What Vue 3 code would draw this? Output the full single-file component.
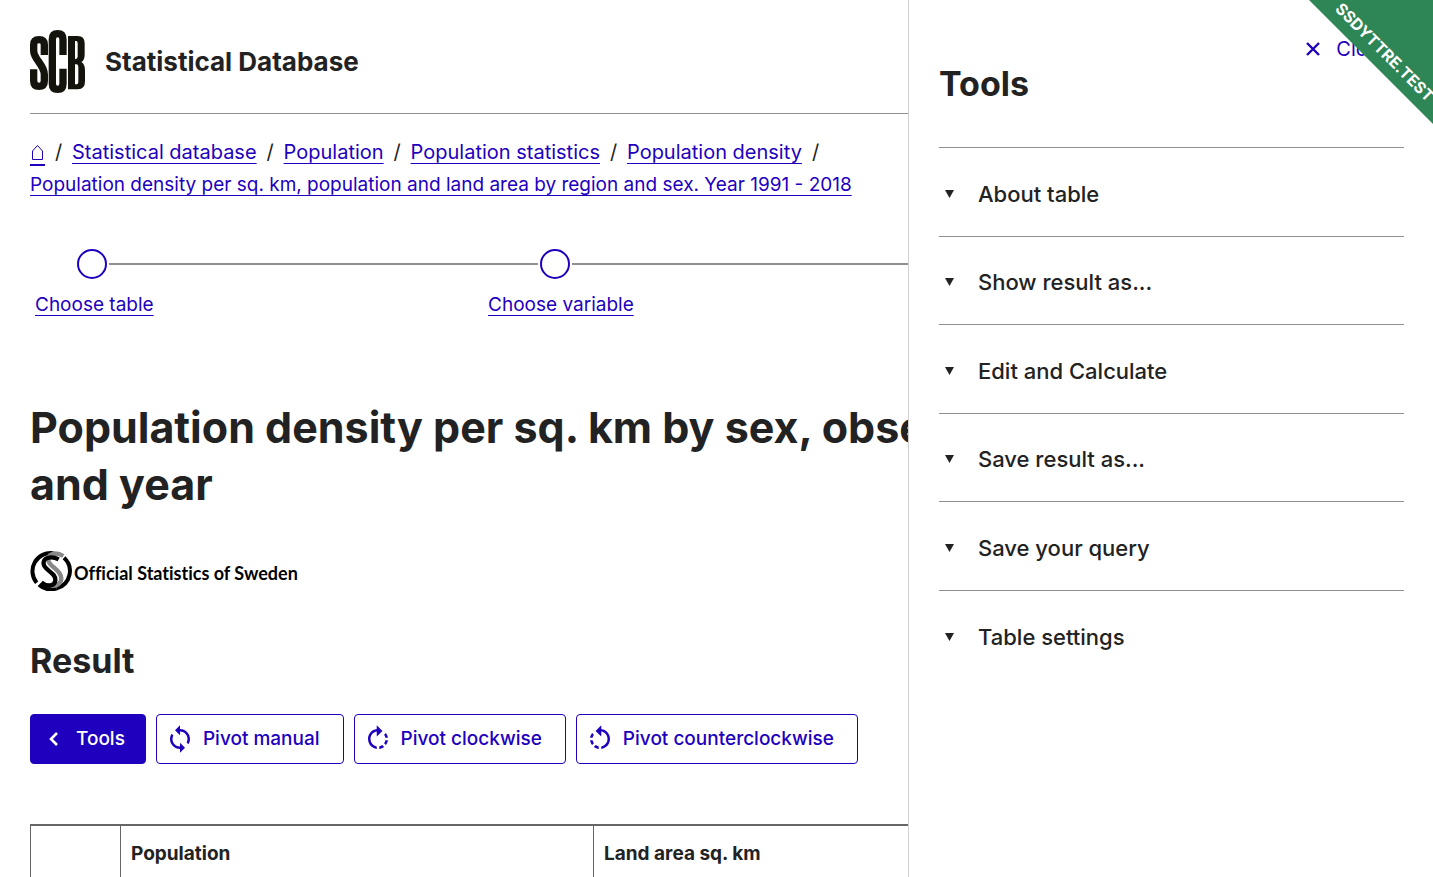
<script setup>
const crumbs = ['Statistical database', 'Population', 'Population statistics', 'Population density']
const lastCrumb = 'Population density per sq. km, population and land area by region and sex. Year 1991 - 2018'
const steps = ['Choose table', 'Choose variable']
const pivots = [
  {
    label: 'Pivot manual',
    path: 'M12 4V1L8 5l4 4V6c3.31 0 6 2.69 6 6 0 1.01-.25 1.97-.7 2.8l1.46 1.46C19.54 15.03 20 13.57 20 12c0-4.42-3.58-8-8-8zm0 14c-3.31 0-6-2.69-6-6 0-1.01.25-1.97.7-2.8L5.24 7.74C4.46 8.97 4 10.43 4 12c0 4.42 3.58 8 8 8v3l4-4-4-4v3z'
  },
  {
    label: 'Pivot clockwise',
    path: 'M15.55 5.55L11 1v3.07C7.06 4.56 4 7.92 4 12s3.05 7.44 7 7.93v-2.02c-2.84-.48-5-2.94-5-5.91s2.16-5.43 5-5.91V10l4.55-4.45zM19.93 11c-.17-1.39-.72-2.73-1.62-3.89l-1.42 1.42c.54.75.88 1.6 1.02 2.47h2.02zM13 17.9v2.02c1.39-.17 2.74-.71 3.9-1.61l-1.44-1.44c-.75.54-1.59.89-2.46 1.03zm3.89-2.42l1.42 1.41c.9-1.16 1.45-2.5 1.62-3.89h-2.02c-.14.87-.48 1.72-1.02 2.48z'
  },
  {
    label: 'Pivot counterclockwise',
    path: 'M7.11 8.53L5.7 7.11C4.8 8.27 4.24 9.61 4.07 11h2.02c.14-.87.49-1.72 1.02-2.47zM6.09 13H4.07c.17 1.39.72 2.73 1.62 3.89l1.41-1.42c-.52-.75-.87-1.59-1.01-2.47zm1.01 5.32c1.16.9 2.51 1.44 3.9 1.61V17.9c-.87-.15-1.71-.49-2.46-1.03L7.1 18.32zM13 4.07V1L8.45 5.55 13 10V6.09c2.84.48 5 2.94 5 5.91s-2.16 5.43-5 5.91v2.02c3.95-.49 7-3.85 7-7.93s-3.05-7.44-7-7.93z'
  }
]
const sections = ['About table', 'Show result as...', 'Edit and Calculate', 'Save result as...', 'Save your query', 'Table settings']
</script>

<template>
  <div class="page">
    <main class="content">
      <header class="site-header">
        <svg class="scb" viewBox="0 0 165 189" aria-label="SCB" role="img">
          <g fill="none" stroke="#15140c" stroke-width="22">
            <path d="M43 75V44Q43 29 27 29Q11 29 11 44V62C11 88 43 104 43 134V152Q43 169 27 169Q11 169 11 152V118" />
            <path d="M99 75V28Q99 11 83 11Q67 11 67 28V161Q67 178 83 178Q99 178 99 161V116" />
          </g>
          <path fill="#15140c" fill-rule="evenodd" d="M114 18H143Q164 18 164 40V74Q164 91 154 96Q165 103 165 120V154Q165 178 144 178H114ZM135 33V87H138Q143 87 143 79V40Q143 33 138 33ZM135 103V163H139Q145 163 145 155V112Q145 103 139 103Z" />
        </svg>
        <span class="site-name">Statistical Database</span>
      </header>

      <nav class="crumbs" aria-label="Breadcrumb">
        <a href="#" class="home" aria-label="Home">
          <svg viewBox="0 0 15 20" aria-hidden="true"><path d="M2.500 17.500V9L7.500 3.500L12.500 9V17.500Z" fill="none" stroke="currentColor" /></svg>
        </a>
        <span class="slash">/</span>
        <template v-for="c in crumbs" :key="c">
          <a href="#">{{ c }}</a><span class="slash">/</span>
        </template>
        <a href="#" class="current">{{ lastCrumb }}</a>
      </nav>

      <ol class="steps">
        <li v-for="s in steps" :key="s" class="step">
          <div class="track"><i class="before"></i><i class="dot"></i><i class="after"></i></div>
          <a href="#">{{ s }}</a>
        </li>
        <li class="step" aria-hidden="true"><div class="track"><i class="before"></i></div></li>
      </ol>

      <h1>Population density per sq. km by sex, observations and year</h1>

      <div class="official">
        <svg viewBox="0 0 126 120" aria-hidden="true" fill="none">
          <path d="M70 7A54 54 0 0 0 20 95" stroke="#000" stroke-width="12" />
          <path d="M27 101A54 54 0 0 0 80 112" stroke="#000" stroke-width="12" />
          <path d="M102 20A54 54 0 0 1 80 112" stroke="#000" stroke-width="12" />
          <path d="M100 15C75 0 48 10 56 32C63 49 94 58 94 82C94 98 78 107 62 104" stroke="#888" stroke-width="13" />
          <path d="M86 25C62 12 34 22 42 43C49 61 78 66 76 88C75 104 54 110 34 94" stroke="#000" stroke-width="13" />
        </svg>
        <span>Official Statistics of Sweden</span>
      </div>

      <h2>Result</h2>

      <div class="actions">
        <button type="button" class="btn primary">
          <svg class="chevron" viewBox="0 0 16 16" aria-hidden="true"><path d="M12 2L6 8L12 14" fill="none" stroke="currentColor" stroke-width="2.600" /></svg>
          Tools
        </button>
        <button v-for="p in pivots" :key="p.label" type="button" class="btn">
          <svg class="icon" viewBox="0 0 24 24" aria-hidden="true"><path :d="p.path" fill="currentColor" /></svg>
          {{ p.label }}
        </button>
      </div>

      <table class="result">
        <thead>
          <tr>
            <td class="stub"></td>
            <th scope="col" class="pop">Population</th>
            <th scope="col">Land area sq. km</th>
          </tr>
        </thead>
      </table>
    </main>

    <aside class="drawer">
      <div class="drawer-head">
        <button type="button" class="close">
          <svg viewBox="0 0 14 14" aria-hidden="true"><path d="M1 1L13 13M13 1L1 13" stroke="currentColor" stroke-width="2.400" fill="none" /></svg>
          Close
        </button>
        <h2>Tools</h2>
      </div>
      <div class="sections">
        <button v-for="s in sections" :key="s" type="button" class="section">
          <svg viewBox="0 0 9 8" aria-hidden="true"><path d="M0 0H9L4.500 8Z" fill="currentColor" /></svg>
          {{ s }}
        </button>
      </div>
    </aside>

    <div class="ribbon"><span>SSDYTTRE.TEST</span></div>
  </div>
</template>

<style>
body {
  overflow: hidden;
  background: #fff;
}
</style>

<style scoped>
.page {
  position: relative;
  height: 100vh;
  overflow: hidden;
  color: #222;
  font-family: Inter, "Liberation Sans", sans-serif;
  font-size: 20px;
  line-height: 32px;
}
.content {
  padding: 0 30px;
}
a {
  color: #1e00be;
  text-decoration: underline;
  text-decoration-thickness: 1px;
  text-underline-offset: 4px;
}
button {
  font: inherit;
  cursor: pointer;
}
.site-header {
  display: flex;
  align-items: center;
  gap: 20px;
  padding: 30px 0 20px;
  border-bottom: 1px solid #909090;
}
.scb {
  width: 55px;
  height: 63px;
}
.site-name {
  font-size: 26px;
  font-weight: 700;
}
.crumbs {
  max-width: 875px;
  padding-top: 22px;
}
.current {
  display: inline-block;
  font-size: 19px;
}
.home {
  display: inline-block;
  width: 15px;
  height: 22px;
  border-bottom: 2px solid #1e00be;
  vertical-align: middle;
}
.home svg {
  display: block;
  width: 15px;
  height: 20px;
}
.slash {
  display: inline-block;
  width: 7px;
  margin: 0 10px;
}
.steps {
  display: grid;
  grid-template-columns: 33% 33% 1fr;
  margin: 48px 0 0;
  padding: 0;
  list-style: none;
}
.track {
  display: flex;
  align-items: center;
  gap: 2px;
  height: 30px;
  margin-bottom: 9px;
}
.before,
.after {
  height: 2px;
  background: #909090;
}
.before {
  width: 55px;
}
.step:first-child .before {
  width: 45px;
  background: none;
}
.after {
  flex: 1;
}
.dot {
  width: 26px;
  height: 26px;
  border: 2px solid #1e00be;
  border-radius: 50%;
}
.step a {
  margin-left: 5px;
  font-size: 19px;
}
h1 {
  max-width: 1150px;
  margin: 78px 0 0;
  font-size: 43px;
  font-weight: 700;
  line-height: 57px;
}
.official {
  display: flex;
  align-items: flex-end;
  gap: 2px;
  margin-top: 38px;
  color: #000;
  font-family: Lato, sans-serif;
  font-size: 18px;
  font-weight: 700;
  font-variant-ligatures: none;
  line-height: 36px;
}
.official svg {
  width: 42px;
  height: 40px;
}
h2 {
  margin: 0;
  font-size: 34px;
  font-weight: 700;
  line-height: 44px;
}
.content h2 {
  margin-top: 48px;
}
.actions {
  display: flex;
  gap: 10px;
  margin-top: 31px;
}
.btn {
  display: flex;
  align-items: center;
  gap: 8px;
  height: 50px;
  padding: 0 23px 0 8px;
  border: 1px solid #1e00be;
  border-radius: 4px;
  background: #fff;
  color: #1e00be;
  font-size: 19px;
  font-weight: 500;
}
.primary {
  gap: 15px;
  padding: 0 20px 0 14px;
  background: #1e00be;
  color: #fff;
}
.icon {
  width: 30px;
  height: 30px;
}
.chevron {
  width: 16px;
  height: 16px;
}
.result {
  width: 100%;
  margin-top: 60px;
  border-collapse: collapse;
  table-layout: fixed;
  border-top: 2px solid #666;
}
.result th,
.result td {
  height: 36px;
  padding: 10px;
  border-left: 1px solid #666;
  font-size: 19px;
  font-weight: 700;
  text-align: left;
}
.result .stub {
  width: 69px;
}
.result .pop {
  width: 452px;
}
.drawer {
  position: absolute;
  top: 0;
  right: 0;
  bottom: 0;
  width: 465px;
  padding: 0 29px 0 30px;
  border-left: 1px solid #d0d0d0;
  background: #fff;
}
.drawer-head {
  padding: 33px 0 41px;
  border-bottom: 1px solid #909090;
}
.drawer-head h2 {
  margin-top: -3px;
}
.close {
  display: flex;
  align-items: center;
  gap: 16px;
  margin-left: auto;
  padding: 0 14px 0 0;
  border: 0;
  background: none;
  color: #1e00be;
}
.close svg {
  width: 14px;
  height: 14px;
}
.sections {
  display: grid;
  grid-auto-rows: 1fr;
  min-height: 531px;
}
.section {
  display: flex;
  align-items: center;
  gap: 24px;
  width: 100%;
  padding: 4px 0 0 6px;
  border: 0;
  border-bottom: 1px solid #909090;
  background: none;
  color: #222;
  font-size: 22px;
  font-weight: 500;
  text-align: left;
}
.section:last-child {
  border-bottom: 0;
}
.section svg {
  width: 9px;
  height: 8px;
}
.ribbon {
  position: absolute;
  top: 0;
  right: 0;
  width: 124px;
  height: 124px;
  overflow: hidden;
  background: #2e8555;
  clip-path: polygon(0 0, 100% 0, 100% 100%);
}
.ribbon span {
  position: absolute;
  top: 52px;
  left: 76px;
  color: #fff;
  font-size: 16px;
  font-weight: 700;
  line-height: 20px;
  transform: translate(-50%, -50%) rotate(45deg);
}
</style>
